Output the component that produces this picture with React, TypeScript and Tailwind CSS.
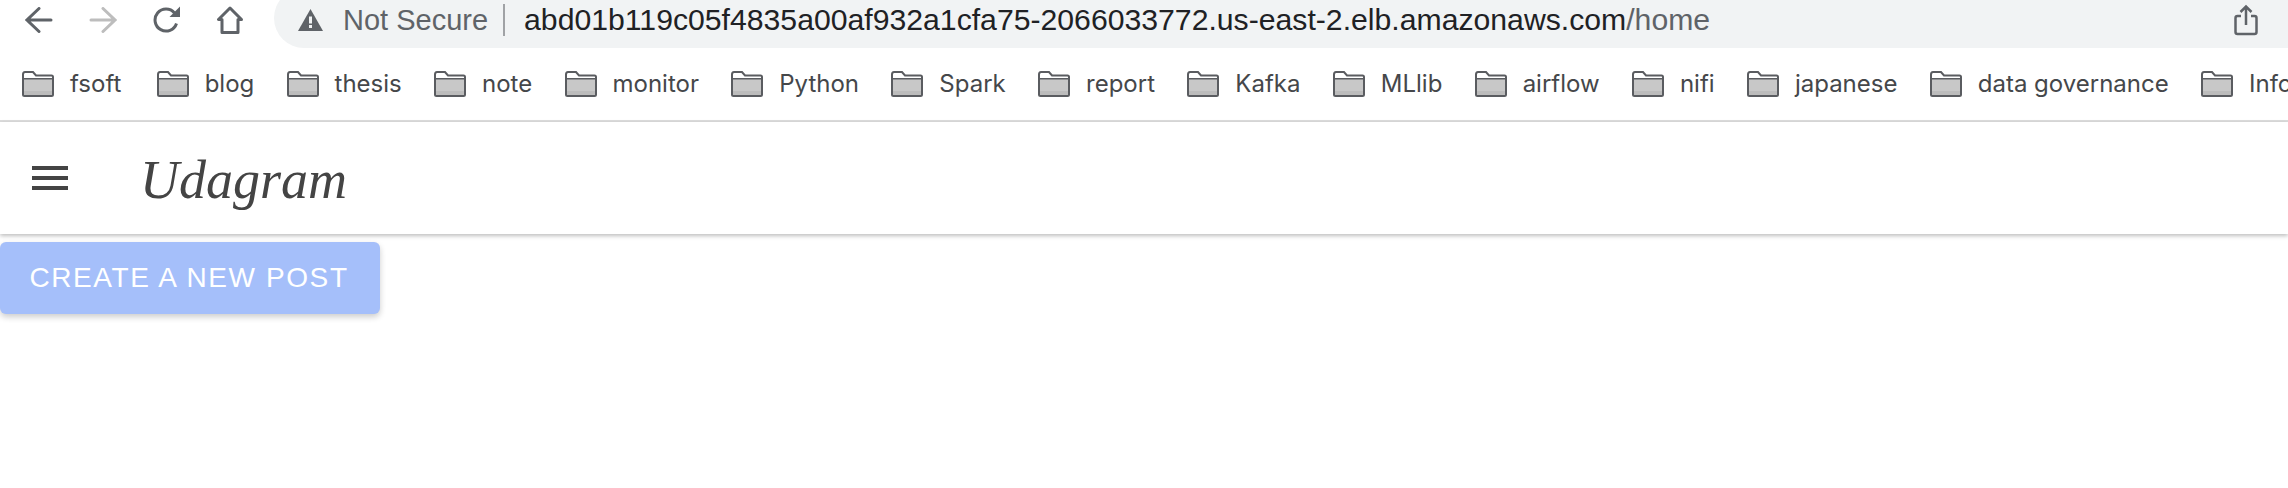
import React from "react";

const bookmarks = ["fsoft","blog","thesis","note","monitor","Python","Spark","report","Kafka","MLlib","airflow","nifi","japanese","data governance","Info"];

function Folder() {
  return (
    <svg width="32" height="26" viewBox="0 0 32 26" className="shrink-0">
      <path d="M1 3.5 Q1 1 3 1 H11 L14 4.5 H29.5 Q31 4.5 31 6 V23.5 Q31 25 29.5 25 H2.5 Q1 25 1 23.5 Z" fill="#fff" stroke="#5a5c60" strokeWidth="2" />
      <rect x="2" y="8" width="28" height="16" fill="#c8c8c8" />
      <rect x="2" y="7" width="28" height="1.5" fill="#5a5c60" />
      <rect x="2" y="20" width="28" height="4" fill="#bcbcbc" />
    </svg>
  );
}

export default function App() {
  return (
    <div className="w-[2288px] h-[488px] overflow-hidden bg-white font-['Inter','Liberation_Sans',sans-serif]">
      <div className="flex h-[48px] items-start overflow-hidden bg-white">
        <div className="flex h-[40px] w-[274px] shrink-0 items-center pl-[25px] gap-[36px]">
          <svg width="28" height="26" viewBox="0 0 28 26" fill="none" stroke="#5f6368" strokeWidth="3" strokeLinecap="round" className="shrink-0"><path d="M26 13H2M14 1.5 2 13 14 24.5" /></svg>
          <svg width="28" height="26" viewBox="0 0 28 26" fill="none" stroke="#bdbdbd" strokeWidth="3" strokeLinecap="round" className="shrink-0"><path d="M2 13H26M14 1.5 26 13 14 24.5" /></svg>
          <svg width="28" height="28" viewBox="0 0 28 28" fill="none" className="shrink-0"><path d="M23.5 17.5a11 11 0 1 1-2-10.5" stroke="#5f6368" strokeWidth="3" /><path d="M27 0.5V11H16.5z" fill="#5f6368" /></svg>
          <svg width="26" height="28" viewBox="0 0 26 28" fill="none" stroke="#5f6368" strokeWidth="3" className="shrink-0"><path d="M13 2 1.5 13.5h3.5V26.5h16V13.5h3.5z" strokeLinejoin="round" /></svg>
        </div>
        <div className="-mt-[12px] flex h-[60px] flex-1 items-center rounded-l-[30px] bg-[#f1f3f4] pt-[4px] pl-[24px]">
          <svg width="25" height="22" viewBox="0 0 25 22" className="shrink-0"><path d="M12.5 0 25 22H0z" fill="#5f6368" /><rect x="11" y="7.5" width="3" height="7" fill="#f1f3f4" /><rect x="11" y="16" width="3" height="3" fill="#f1f3f4" /></svg>
          <span className="ml-[20px] text-[29px] leading-none text-[#5f6368] font-['Liberation_Sans']">Not Secure</span>
          <div className="ml-[15px] h-[32px] w-[2px] bg-[#a0a2a5]" />
          <span className="ml-[19px] text-[30.2px] leading-none text-[#202124] font-['Liberation_Sans']">abd01b119c05f4835a00af932a1cfa75-2066033772.us-east-2.elb.amazonaws.com<span className="text-[#5f6368]">/home</span></span>
          <svg width="24" height="32" viewBox="0 0 24 32" fill="none" stroke="#5f6368" strokeWidth="2.5" className="ml-auto mr-[30px] shrink-0"><path d="M7 12H3.5Q1.5 12 1.5 14V28Q1.5 30 3.5 30H20.5Q22.5 30 22.5 28V14Q22.5 12 20.5 12H17M12 21V2.5M6.5 8 12 2.5 17.5 8" /></svg>
        </div>
      </div>
      <div className="flex h-[74px] items-center gap-[32.3px] overflow-hidden border-b-2 border-[#dcdcdc] pl-[22px] bg-white">
        {bookmarks.map((b) => (
          <div key={b} className="flex shrink-0 items-center gap-[16px] first:mr-[3px]">
            <Folder />
            <span className="text-[24px] leading-none text-[#45474a]">{b}</span>
          </div>
        ))}
      </div>
      <div className="flex h-[112px] items-center bg-white pl-[32px] shadow-[0_2px_4px_rgba(0,0,0,0.25)] relative">
        <div className="flex h-[24px] w-[36px] flex-col justify-between">
          <div className="h-[4px] bg-[#444444]" />
          <div className="h-[4px] bg-[#444444]" />
          <div className="h-[4px] bg-[#444444]" />
        </div>
        <span className="ml-[72px] pt-[4px] text-[54px] italic leading-none text-[#444444] font-['Liberation_Serif',cursive]">Udagram</span>
      </div>
      <div className="mt-[8px] flex h-[72px] w-[380px] items-center justify-center rounded-[6px] bg-[#a5bffa] pr-[2px] text-[28px] tracking-[1.6px] text-white shadow-[0_3px_6px_rgba(0,0,0,0.2)] font-['Liberation_Sans']">
        CREATE A NEW POST
      </div>
    </div>
  );
}
